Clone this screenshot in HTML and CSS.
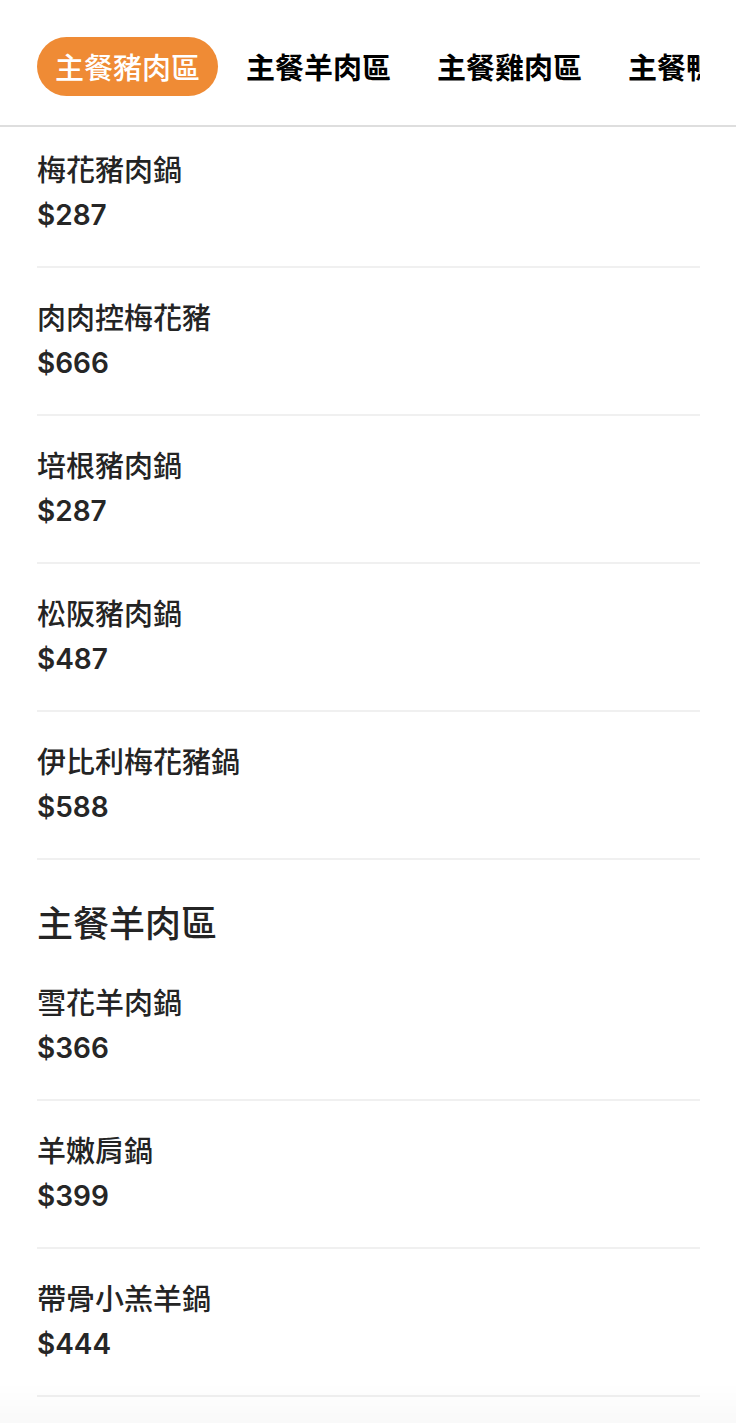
FILE: index.html
```html
<!DOCTYPE html>
<html lang="zh-Hant">
<head>
    <meta charset="UTF-8">
    <meta name="viewport" content="width=device-width, initial-scale=1.0">
    <title>菜單</title>
    <link rel="stylesheet" href="styles.css">
</head>
<body>
    <div class="tab-bar">
        <div class="tab-track">
            <a class="tab active">主餐豬肉區</a>
            <a class="tab">主餐羊肉區</a>
            <a class="tab">主餐雞肉區</a>
            <a class="tab">主餐鴨肉區</a>
        </div>
    </div>
    <div class="menu">
        <div class="item">
            <p class="name">梅花豬肉鍋</p>
            <p class="price">$287</p>
        </div>
        <div class="item">
            <p class="name">肉肉控梅花豬</p>
            <p class="price">$666</p>
        </div>
        <div class="item">
            <p class="name">培根豬肉鍋</p>
            <p class="price">$287</p>
        </div>
        <div class="item">
            <p class="name">松阪豬肉鍋</p>
            <p class="price">$487</p>
        </div>
        <div class="item">
            <p class="name">伊比利梅花豬鍋</p>
            <p class="price">$588</p>
        </div>

        <h2 class="section-title">主餐羊肉區</h2>
        <div class="item">
            <p class="name">雪花羊肉鍋</p>
            <p class="price">$366</p>
        </div>
        <div class="item">
            <p class="name">羊嫩肩鍋</p>
            <p class="price">$399</p>
        </div>
        <div class="item">
            <p class="name">帶骨小羔羊鍋</p>
            <p class="price">$444</p>
        </div>
    </div>
    <div class="bottom-fade"></div>
</body>
</html>
```

FILE: styles.css
```css
body {
    font-family: "Liberation Sans", "Noto Sans CJK TC", sans-serif;
    margin: 0;
    padding: 0;
    background-color: #fff;
    color: #242424;
}

.tab-bar {
    padding: 37px 36px 29px 37px;
    border-bottom: 2px solid #dedede;
}

.tab-track {
    display: flex;
    gap: 10px;
    overflow: hidden;
}

.tab {
    flex-shrink: 0;
    padding: 0 18px;
    height: 59px;
    line-height: 59px;
    border-radius: 30px;
    font-family: "Noto Sans CJK TC", sans-serif;
    font-size: 29px;
    font-weight: 700;
    color: #000;
    white-space: nowrap;
}

.tab.active {
    background-color: #ef8b35;
    color: #fff;
    font-weight: 500;
}

.menu {
    padding: 0 36px 40px 37px;
}

.item {
    padding: 29px 0 29px;
    border-bottom: 2px solid #f0f0f0;
}

.item:first-child {
    padding-top: 22px;
}

.item p {
    margin: 0;
    line-height: 44px;
}

.name {
    font-size: 29px;
    font-weight: 500;
}

.price {
    font-family: Inter, "Noto Sans CJK TC", sans-serif;
    font-size: 28px;
    font-weight: 600;
    color: #262626;
}

.section-title {
    margin: 0;
    padding: 40px 0 3px;
    line-height: 50px;
    font-size: 36px;
    font-weight: 500;
}

.bottom-fade {
    position: fixed;
    left: 0;
    right: 0;
    bottom: 0;
    height: 40px;
    background: linear-gradient(rgba(0, 0, 0, 0), rgba(0, 0, 0, 0.025));
    pointer-events: none;
}
```
